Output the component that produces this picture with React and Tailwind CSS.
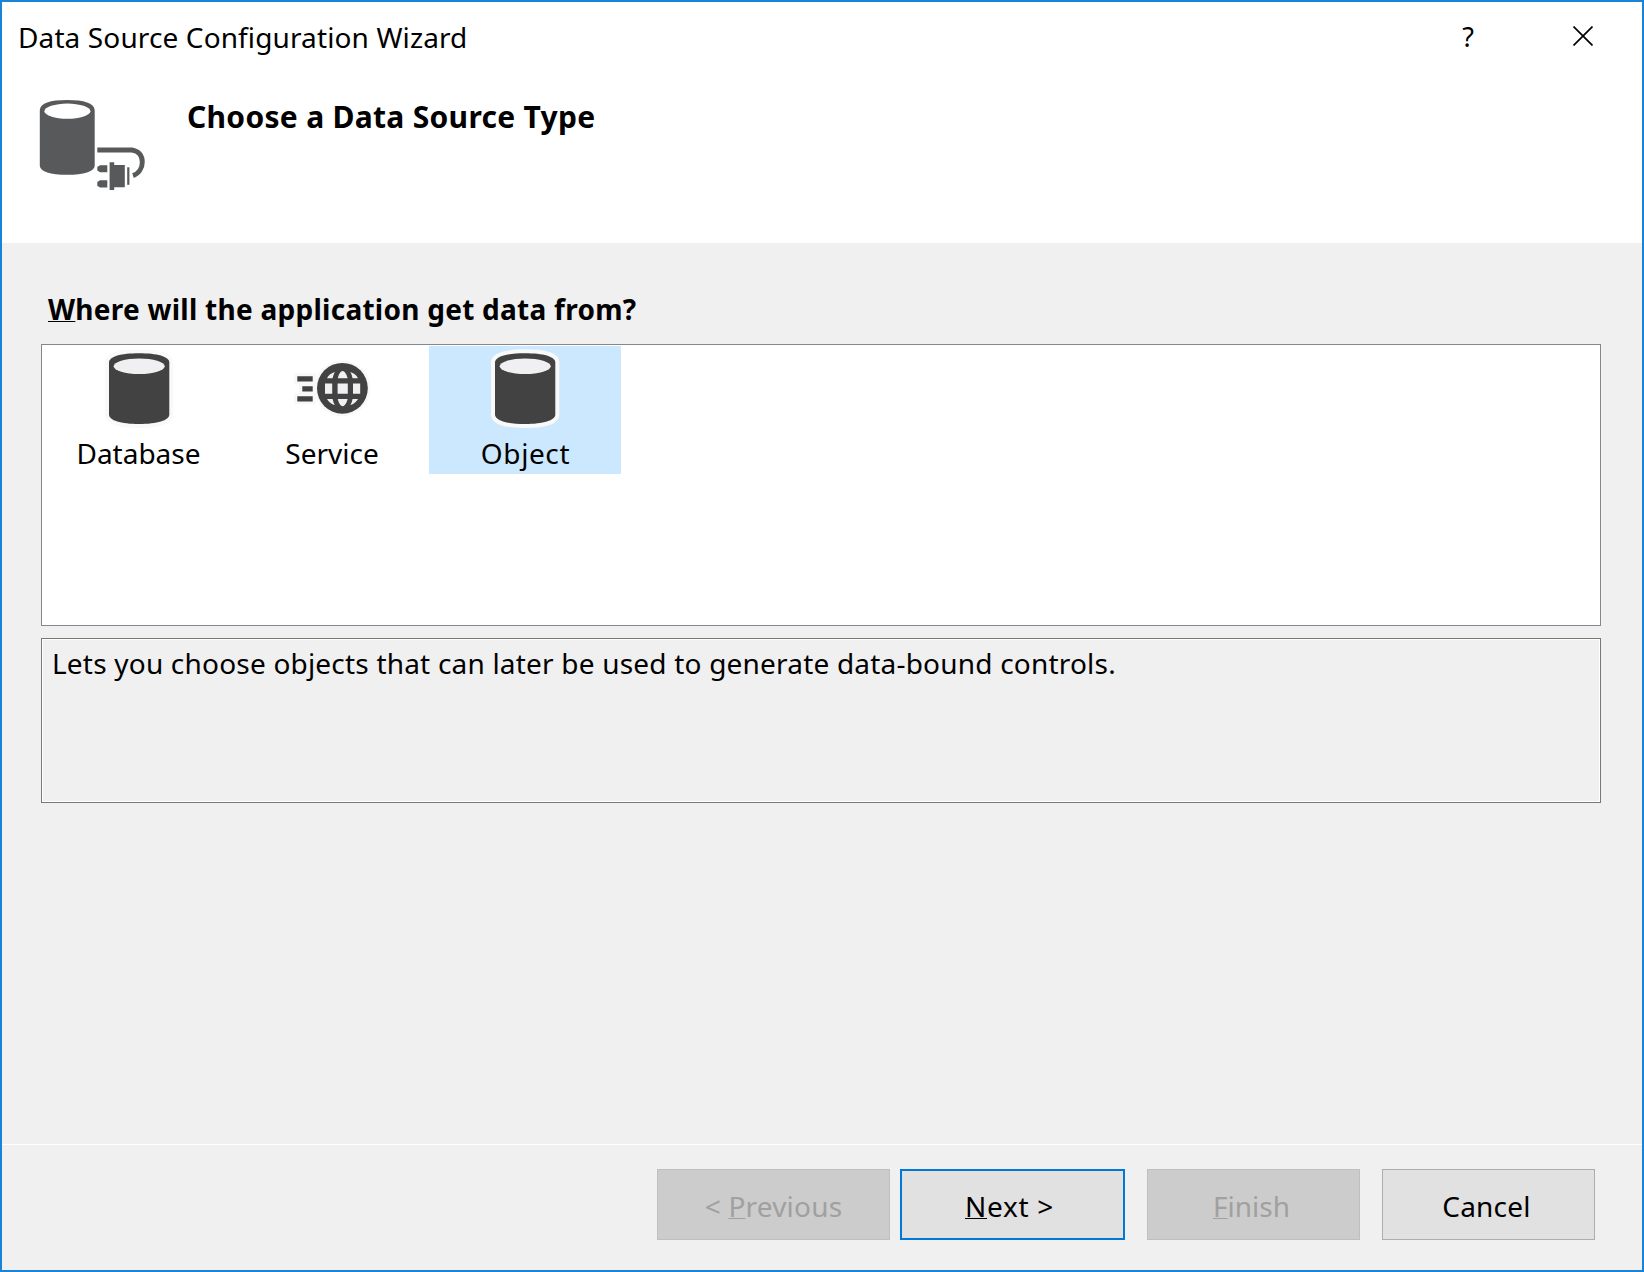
import React from "react";

function DataSourceIcon() {
  return (
    <svg className="block shrink-0" width="108" height="94" viewBox="38 98 108 94" fill="#58595b">
      <path d="M39.8 110 C40.5 103 50 100 67.2 100 C84 100 94 103 94.7 110 V166 C94 171.5 84 174.8 67.2 174.8 C50 174.8 40.5 171.5 39.8 166 Z" />
      <ellipse cx="67.4" cy="111.2" rx="23" ry="7.6" fill="#fff" />
      <path d="M97.3 150 H132 C138.5 151 142.3 155.5 142.3 162 C142.3 168 139 173.5 133 175.6" fill="none" stroke="#58595b" strokeWidth="4.9" />
      <path d="M97.3 167 L100 165.2 H107.3 V172.2 H100 L97.3 170.5 Z M97.3 182 L100 180.2 H107.3 V187.5 H100 L97.3 185.8 Z" />
      <path d="M109.6 162.3 H114.2 V165 H124.8 V187.3 H114.2 V190 H109.6 Z" />
      <rect x="127.2" y="167.3" width="2.2" height="17.5" />
    </svg>
  );
}

function CylinderIcon({ halo }) {
  const body =
    "M4.5 13.5 C4.5 7.5 16.5 4.3 34.5 4.3 C52.5 4.3 64.8 7.5 64.8 13.5 V65.5 C64.8 71.5 52.5 75 34.5 75 C16.5 75 4.5 71.5 4.5 65.5 Z";
  return (
    <svg className="block" width="70" height="80" viewBox="-0.5 0 70 80">
      <path d={body} fill={halo} stroke={halo} strokeWidth="8" strokeLinejoin="round" />
      <path d={body} fill="#424242" />
      <ellipse cx="34.7" cy="17.3" rx="25.5" ry="7.8" fill="#f0eff1" />
    </svg>
  );
}

function ServiceIcon() {
  return (
    <svg className="block" width="80" height="80" viewBox="292 348.7 80 80">
      <path d="M294 373 H316 V404 H294 V393 H299 V384 H294 Z" fill="#f8f8f8" />
      <circle cx="342.4" cy="388" r="28" fill="#f8f8f8" />
      <path d="M297.3 376 h15.4 v5.2 h-15.4 z M302.3 386 h10.4 v5.2 h-10.4 z M297.3 396 h15.4 v5.2 h-15.4 z" fill="#424242" />
      <circle cx="342.4" cy="388" r="25.4" fill="#424242" />
      <g fill="#f0eff1">
        <path d="M337.6 383.2 h10.2 v10.2 h-10.2 z M325 383.2 h7.2 v10.2 h-7.2 z M353 383.2 h7.2 v10.2 h-7.2 z" />
        <path d="M337.8 378 C338.5 374.5 340.2 371 342.6 370.6 C345 371 346.8 374.5 347.6 378 Z" />
        <path d="M337.8 398.6 C338.5 402 340.2 405.6 342.6 406 C345 405.6 346.8 402 347.6 398.6 Z" />
        <path d="M327 378 C328.5 375 331.5 372.8 334.8 371.8 C333.8 373.8 333 375.8 332.6 378 Z" />
        <path d="M358 378 C356.5 375 353.5 372.8 350.4 371.8 C351.4 373.8 352.2 375.8 352.6 378 Z" />
        <path d="M327 398.6 C328.5 401.6 331.5 403.8 334.8 404.8 C333.8 402.8 333 400.8 332.6 398.6 Z" />
        <path d="M358 398.6 C356.5 401.6 353.5 403.8 350.4 404.8 C351.4 402.8 352.2 400.8 352.6 398.6 Z" />
      </g>
    </svg>
  );
}

function SourceItem({ label, selected, labelClass, children }) {
  return (
    <div className={`flex h-32 w-48 flex-col items-center pt-[3px] ${selected ? "bg-[#cce8ff]" : ""}`}>
      {children}
      <span className={`mt-1 leading-10 ${labelClass}`}>{label}</span>
    </div>
  );
}

function Key({ children }) {
  return (
    <span className="underline decoration-1 underline-offset-1 [text-decoration-skip-ink:none]">
      {children}
    </span>
  );
}

export default function App() {
  return (
    <div className="flex h-[1272px] w-[1644px] flex-col border-2 border-[#1883d7] bg-[#f0f0f0] font-['Noto_Sans','Open_Sans',sans-serif] text-[28px] text-black">
      <header className="h-[241px] shrink-0 bg-white">
        <div className="flex h-[70px] items-start justify-between pt-[15px] pr-[49px] pl-4">
          <h1 className="leading-10 tracking-[0.12px]">Data Source Configuration Wizard</h1>
          <div className="flex items-start">
            <button className="mr-[98px] w-[14px] text-center text-[27px] leading-10">?</button>
            <svg className="mt-[9px] block" width="20" height="20" viewBox="0 0 20 20">
              <path d="M0.5 0.5 L19.5 19.5 M19.5 0.5 L0.5 19.5" stroke="#000" strokeWidth="1.7" fill="none" />
            </svg>
          </div>
        </div>
        <div className="flex items-start pt-[26px] pl-9">
          <DataSourceIcon />
          <h2 className="-mt-px ml-[41px] text-[30px] leading-10 font-bold tracking-[0.3px]">Choose a Data Source Type</h2>
        </div>
      </header>

      <main className="flex flex-1 flex-col px-[39px] pt-[46px]">
        <p className="ml-[7px] leading-10 font-bold tracking-[0.26px]">
          <Key>W</Key>here will the application get data from?
        </p>
        <div className="mt-[15px] flex h-[282px] w-[1560px] gap-px border border-[#828790] bg-white pt-px pl-px">
          <SourceItem label="Database" labelClass="-ml-px">
            <CylinderIcon halo="#f9f9f9" />
          </SourceItem>
          <SourceItem label="Service" labelClass="">
            <ServiceIcon />
          </SourceItem>
          <SourceItem label="Object" selected labelClass="ml-px tracking-[0.6px]">
            <CylinderIcon halo="#f9f9f9" />
          </SourceItem>
        </div>
        <div className="mt-3 h-[165px] w-[1560px] border border-[#787878]">
          <p className="h-full border border-white pt-[3px] pl-[9px] leading-10 tracking-[0.2px]">
            Lets you choose objects that can later be used to generate data-bound controls.
          </p>
        </div>
      </main>

      <footer className="flex h-[126px] shrink-0 items-start justify-end border-t border-white pt-6 pr-[47px]">
        <button className="h-[71px] w-[233px] border border-[#bfbfbf] bg-[#cccccc] pb-[13px] pt-4 leading-10 tracking-[0.2px] text-[#a0a0a0]">
          &lt; <Key>P</Key>revious
        </button>
        <button className="ml-[10px] h-[71px] w-[225px] border-2 border-[#0078d7] bg-[#e1e1e1] pt-[15px] pr-[6px] pb-3 leading-10 tracking-[0.7px]">
          <Key>N</Key>ext &gt;
        </button>
        <button className="ml-[22px] h-[71px] w-[213px] border border-[#bfbfbf] bg-[#cccccc] pt-4 pr-1 pb-[13px] leading-10 text-[#a0a0a0]">
          <Key>F</Key>inish
        </button>
        <button className="ml-[22px] h-[71px] w-[213px] border border-[#adadad] bg-[#e1e1e1] pt-4 pr-1 pb-[13px] leading-10 tracking-[0.2px]">
          Cancel
        </button>
      </footer>
    </div>
  );
}
